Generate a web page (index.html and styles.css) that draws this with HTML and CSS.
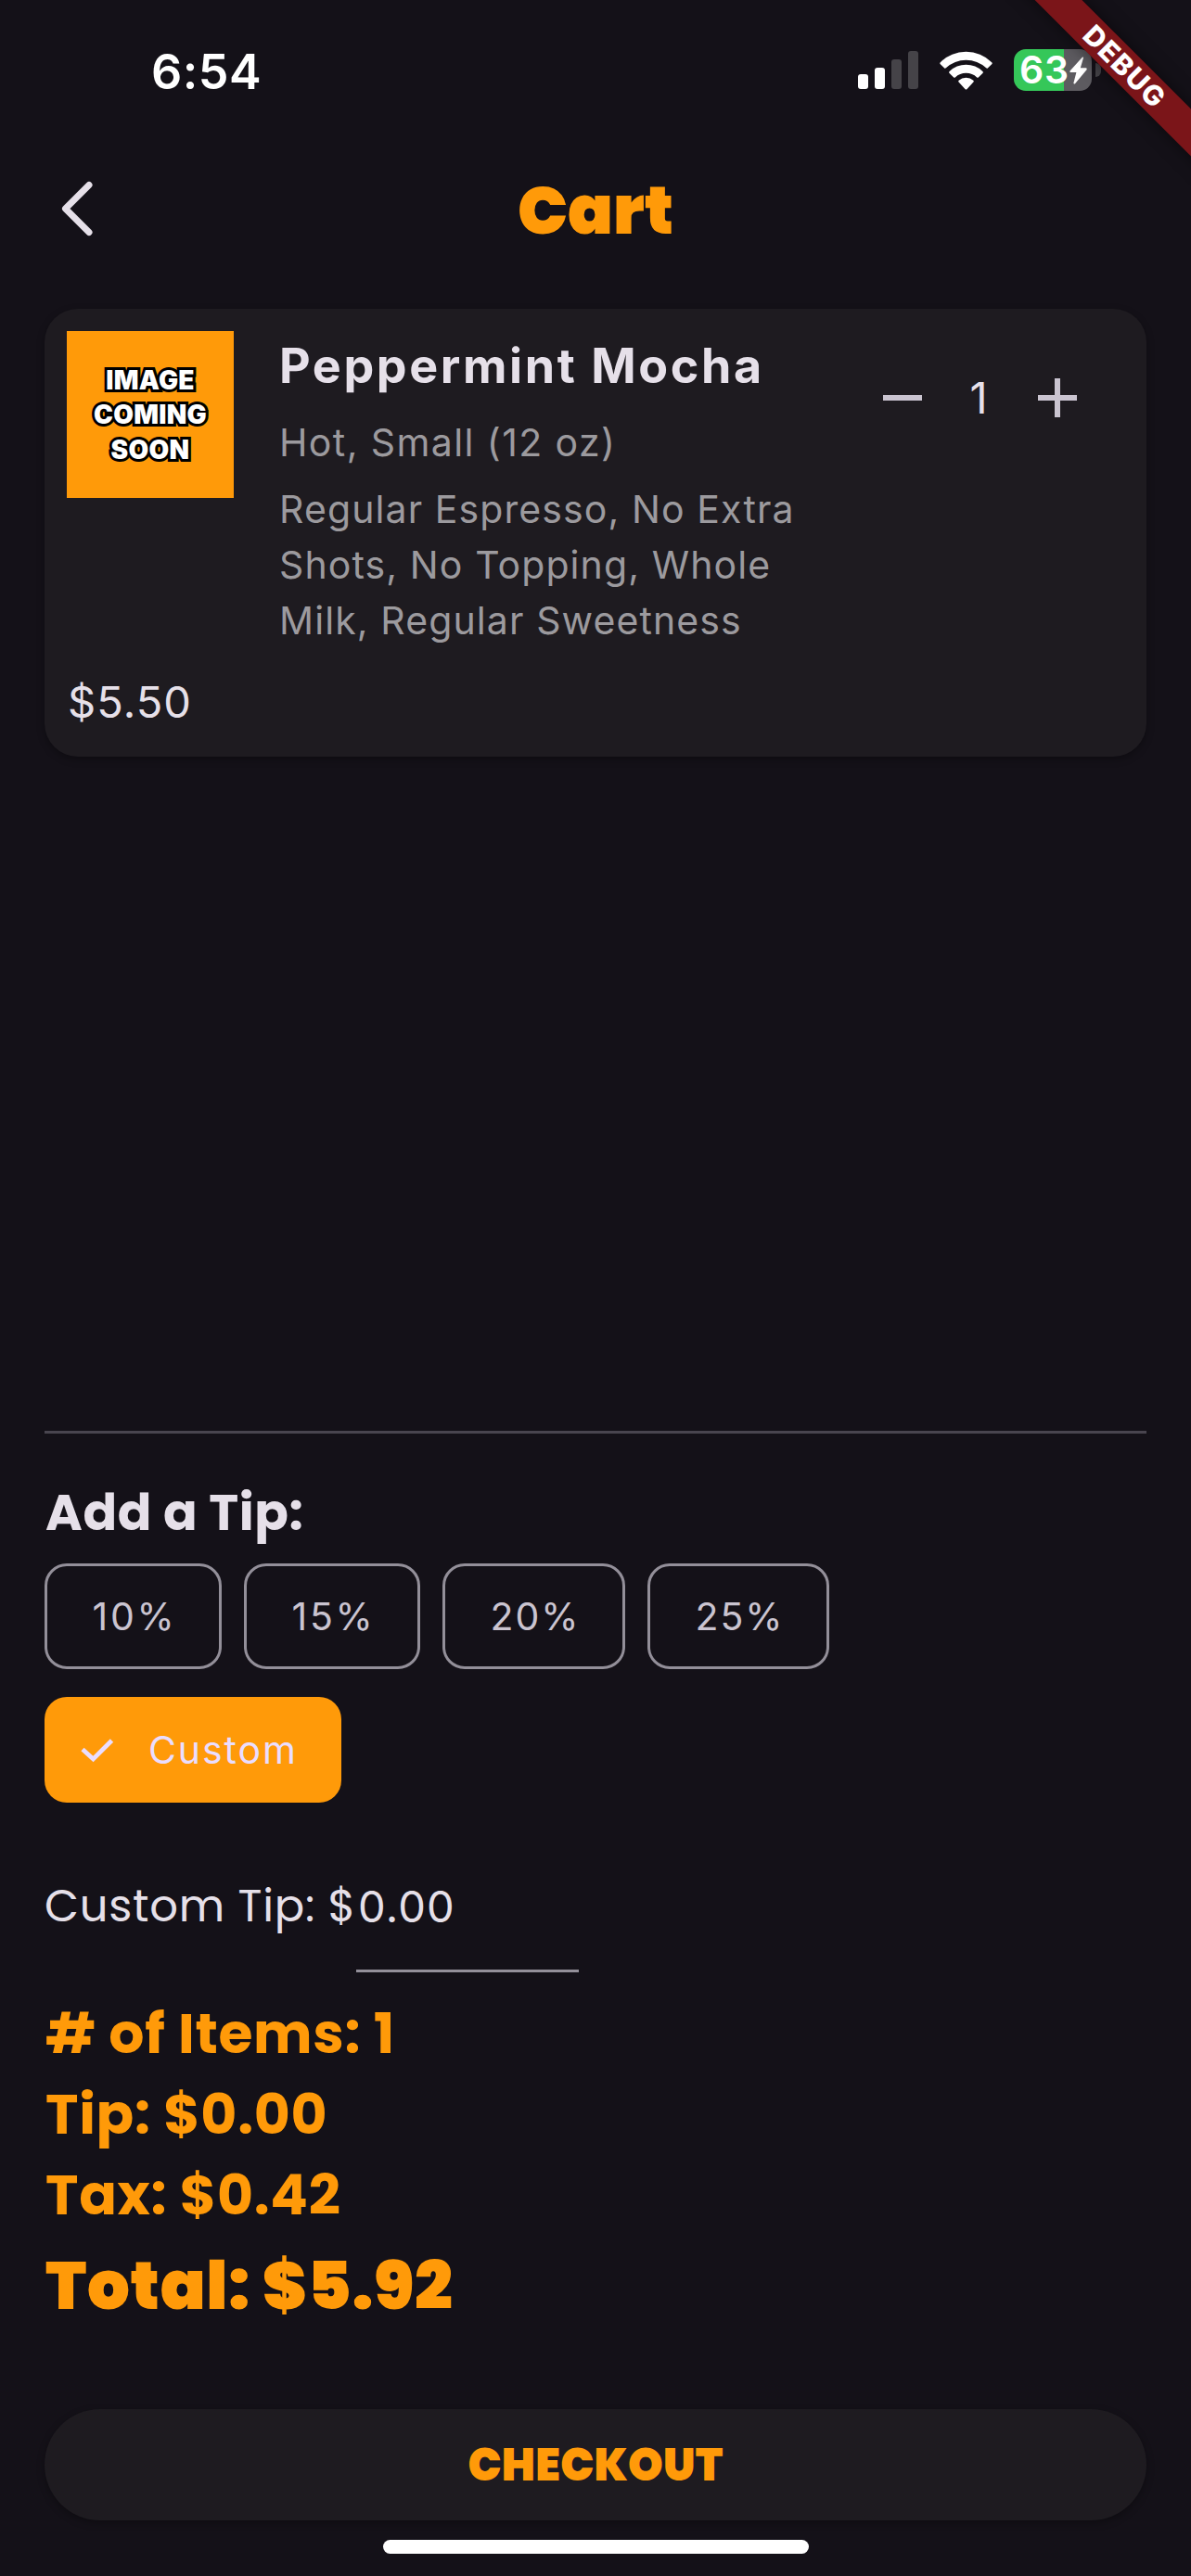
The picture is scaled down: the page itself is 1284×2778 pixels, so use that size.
FILE: index.html
```html
<!DOCTYPE html>
<html lang="en">
<head>
<meta charset="utf-8">
<title>Cart</title>
<link rel="stylesheet" href="styles.css">
</head>
<body>
<div class="screen">
  <div class="statusbar">
    <span class="time">6:54</span>
    <div class="status-icons">
      <svg class="signal" width="65" height="41" viewBox="0 0 65 41"><rect x="0" y="25" width="11" height="16" rx="3" fill="#fff"/><rect x="18" y="18" width="11" height="23" rx="3" fill="#fff"/><rect x="36" y="9" width="11" height="32" rx="3" fill="#454348"/><rect x="54" y="0" width="11" height="41" rx="3" fill="#454348"/></svg>
      <svg class="wifi" width="57" height="42" viewBox="0 0 57 42"><path d="M0.800 12.200A39.500 39.500 0 0 1 56.200 12.200Q57.200 13.200 56.200 14.200L51.800 18.400Q51 19 50.200 18.300A32 32 0 0 0 6.800 18.300Q6 19 5.200 18.400L0.800 14.200Q-0.200 13.200 0.800 12.200ZM10.600 22A25.500 25.500 0 0 1 46.400 22Q47.400 23 46.400 24L41.800 28.400Q41 29.100 40.200 28.400A17.200 17.200 0 0 0 16.800 28.400Q16 29.100 15.200 28.400L10.600 24Q9.600 23 10.600 22ZM20.600 31.800A12 12 0 0 1 36.400 31.800Q37.200 32.600 36.400 33.500L29.600 41Q28.500 42 27.400 41L20.600 33.500Q19.800 32.600 20.600 31.800Z" fill="#fff"/></svg>
      <div class="battery">
        <div class="cell"><span class="pct">63</span><svg class="bolt" width="19" height="30" viewBox="0 0 19 30"><path d="M14 0.500L0.500 15.500Q0 17 1.200 17H7.400L4.400 28.500Q4.600 30 6 29.200L18.700 14Q19 12.500 17.800 12.300H11.800L15 1.500Q15 0 14 0.500Z" fill="#fff"/></svg></div>
        <div class="nub"></div>
      </div>
    </div>
  </div>

  <header class="appbar">
    <svg class="back" width="34" height="60" viewBox="0 0 34 60"><path d="M30 4.500L4.500 30L30 55.500" fill="none" stroke="#e6e0e9" stroke-width="7" stroke-linecap="round" stroke-linejoin="round"/></svg>
    <h1 class="title">Cart</h1>
  </header>

  <section class="card">
    <div class="card-main">
      <div class="thumb"><span>IMAGE</span><span>COMING</span><span>SOON</span></div>
      <div class="details">
        <div class="name">Peppermint Mocha</div>
        <div class="desc size">Hot, Small (12 oz)</div>
        <div class="desc mods"><span>Regular Espresso, No Extra</span><br><span>Shots, No Topping, Whole</span><br><span>Milk, Regular Sweetness</span></div>
      </div>
      <div class="stepper">
        <svg width="42" height="42" viewBox="0 0 42 42"><path d="M0 21H42" stroke="#cac4d0" stroke-width="6"/></svg>
        <span class="qty">1</span>
        <svg width="42" height="42" viewBox="0 0 42 42"><path d="M0 21H42M21 0V42" stroke="#cac4d0" stroke-width="6"/></svg>
      </div>
    </div>
    <div class="price">$5.50</div>
  </section>

  <div class="spacer"></div>

  <section class="tip">
    <h2 class="tip-title">Add a Tip:</h2>
    <div class="chips">
      <span class="chip w10"><b>10%</b></span>
      <span class="chip w15"><b>15%</b></span>
      <span class="chip w20"><b>20%</b></span>
      <span class="chip w25"><b>25%</b></span>
      <span class="chip selected"><svg width="36" height="27" viewBox="0 0 36 27"><path d="M2 12.500L13.500 23L33.500 3" fill="none" stroke="#eaddff" stroke-width="4.800"/></svg><b>Custom</b></span>
    </div>
    <div class="custom">
      <span class="custom-label">Custom Tip: $</span>
      <span class="field">0.00</span>
    </div>
  </section>

  <section class="totals">
    <div class="row">#&nbsp;of Items: 1</div>
    <div class="row">Tip: $0.00</div>
    <div class="row">Tax: $0.42</div>
    <div class="row total">Total: $5.92</div>
  </section>

  <div class="checkout">CHECKOUT</div>
  <div class="home"></div>
  <div class="ribbon">DEBUG</div>
</div>
</body>
</html>
```
FILE: styles.css
```css
* { box-sizing: border-box; }
body {
  margin: 0;
  background: #141118;
  color: #e6e0e9;
  font-family: Inter, "Liberation Sans", sans-serif;
}
.screen {
  position: relative;
  width: 1284px;
  height: 2778px;
  overflow: hidden;
  display: flex;
  flex-direction: column;
  background: #141118;
}
.statusbar {
  height: 151px;
  padding: 0 97px 0 163px;
  display: flex;
  align-items: center;
  justify-content: space-between;
}
.time {
  color: #fff;
  font-size: 52px;
  font-weight: 600;
  letter-spacing: 0.5px;
  line-height: 60px;
  padding-top: 4px;
}
.status-icons { display: flex; align-items: center; }
.wifi { margin: 0 23px; }
.battery { display: flex; align-items: center; gap: 4px; }
.cell {
  width: 84px;
  height: 45px;
  border-radius: 13px;
  background: linear-gradient(90deg, #35c759 54px, #5d5b60 54px);
  display: flex;
  align-items: center;
  padding-left: 6px;
}
.pct {
  width: 54px;
  color: #fff;
  font-size: 41px;
  font-weight: 600;
  line-height: 45px;
  letter-spacing: 0.8px;
}
.nub { width: 6px; height: 15px; border-radius: 0 6px 6px 0; background: #454348; }

.appbar {
  height: 152px;
  margin-bottom: 30px;
  padding: 0 66px;
  display: grid;
  grid-template-columns: 34px 1fr 34px;
  align-items: center;
}
.back { margin-bottom: 4px; }
.title {
  margin: 0;
  text-align: center;
  font-family: Poppins, Inter, sans-serif;
  font-size: 72px;
  font-weight: 900;
  line-height: 100px;
  color: #ff9a09;
}

.card {
  margin: 0 48px;
  height: 483px;
  padding: 24px;
  border-radius: 36px;
  background: #1e1b20;
  box-shadow: 0 3px 9px rgba(0, 0, 0, 0.3);
}
.card-main { display: flex; }
.thumb {
  width: 180px;
  height: 180px;
  padding-top: 2px;
  background: #ff9a09;
  display: flex;
  flex-direction: column;
  align-items: center;
  justify-content: center;
  color: #fff;
  font: 900 28px/37.500px Inter, "Liberation Sans", sans-serif;
  letter-spacing: 0.3px;
  -webkit-text-stroke: 6px #000;
  paint-order: stroke fill;
}
.details { width: 600px; margin-left: 49px; }
.name { font-size: 52px; font-weight: 700; line-height: 76px; letter-spacing: 2.600px; }
.desc { font-size: 41px; line-height: 60px; letter-spacing: 1.100px; color: #9c9a9e; }
.size { margin-top: 14px; letter-spacing: 1.400px; }
.mods { margin-top: 12px; }
.stepper {
  flex: 1;
  height: 144px;
  padding: 0 51px;
  display: flex;
  align-items: center;
  justify-content: space-between;
}
.qty { margin-right: 3px; font-size: 47px; line-height: 60px; }
.price { margin-top: 28px; padding-left: 1px; font-size: 47px; line-height: 60px; letter-spacing: 1.100px; }

.spacer { flex: 1; }

.tip {
  margin: 0 48px;
  padding-top: 50px;
  border-top: 3px solid #49454f;
}
.tip-title {
  margin: 0 0 20px;
  font-family: Poppins, Inter, sans-serif;
  font-size: 54px;
  font-weight: 700;
  line-height: 70px;
  letter-spacing: 0.600px;
  padding-left: 1px;
}
.chips { display: flex; flex-wrap: wrap; gap: 30px 24px; width: 940px; }
.chip {
  height: 114px;
  padding-left: 3px;
  border: 3px solid #938f99;
  border-radius: 24px;
  display: flex;
  align-items: center;
  justify-content: center;
  color: #cac4d0;
  font-size: 41px;
  line-height: 60px;
}
.chip b { font-weight: 400; }
.w10 { width: 191px; letter-spacing: 2.700px; }
.w15 { width: 190px; letter-spacing: 2.700px; }
.w20 { width: 197px; letter-spacing: 2px; }
.w25 { width: 196px; letter-spacing: 2px; }
.selected {
  width: 320px;
  border: 0;
  background: #ff9a09;
  color: #eaddff;
  justify-content: flex-start;
  padding-left: 39px;
  gap: 37px;
  letter-spacing: 1.900px;
}
.custom { display: flex; margin-top: 40px; height: 143px; line-height: 143px; }
.custom-label {
  width: 336px;
  white-space: nowrap;
  font-family: Poppins, Inter, sans-serif;
  font-size: 48px;
  letter-spacing: 0.750px;
}
.field {
  width: 240px;
  padding-left: 2px;
  border-bottom: 3px solid #938f99;
  font-size: 47px;
  letter-spacing: 1.200px;
}

.totals {
  margin: 23px 48px 79px;
  color: #ff9a09;
  font-family: Poppins, Inter, sans-serif;
}
.row { padding-left: 1px; font-size: 60px; font-weight: 700; line-height: 87px; letter-spacing: 0.700px; }
.total { font-size: 72px; font-weight: 900; line-height: 108px; letter-spacing: 0.700px; }

.checkout {
  height: 120px;
  margin: 0 48px 21px;
  border-radius: 60px;
  background: #1e1b20;
  box-shadow: 0 3px 9px rgba(0, 0, 0, 0.3);
  text-align: center;
  font-family: Poppins, Inter, sans-serif;
  font-size: 48px;
  font-weight: 900;
  line-height: 121px;
  letter-spacing: 0.200px;
  color: #ff9a09;
}
.home { width: 459px; height: 15px; margin: 0 auto 24px; border-radius: 8px; background: #fff; }

.ribbon {
  position: absolute;
  left: 1011px;
  top: 52px;
  width: 400px;
  height: 36px;
  padding-left: 5px;
  transform: rotate(45deg);
  background: #7b1519;
  box-shadow: 0 0 18px rgba(0, 0, 0, 0.5);
  color: #fff;
  text-align: center;
  font-size: 30px;
  font-weight: 800;
  line-height: 36px;
  letter-spacing: 1.5px;
}
```
